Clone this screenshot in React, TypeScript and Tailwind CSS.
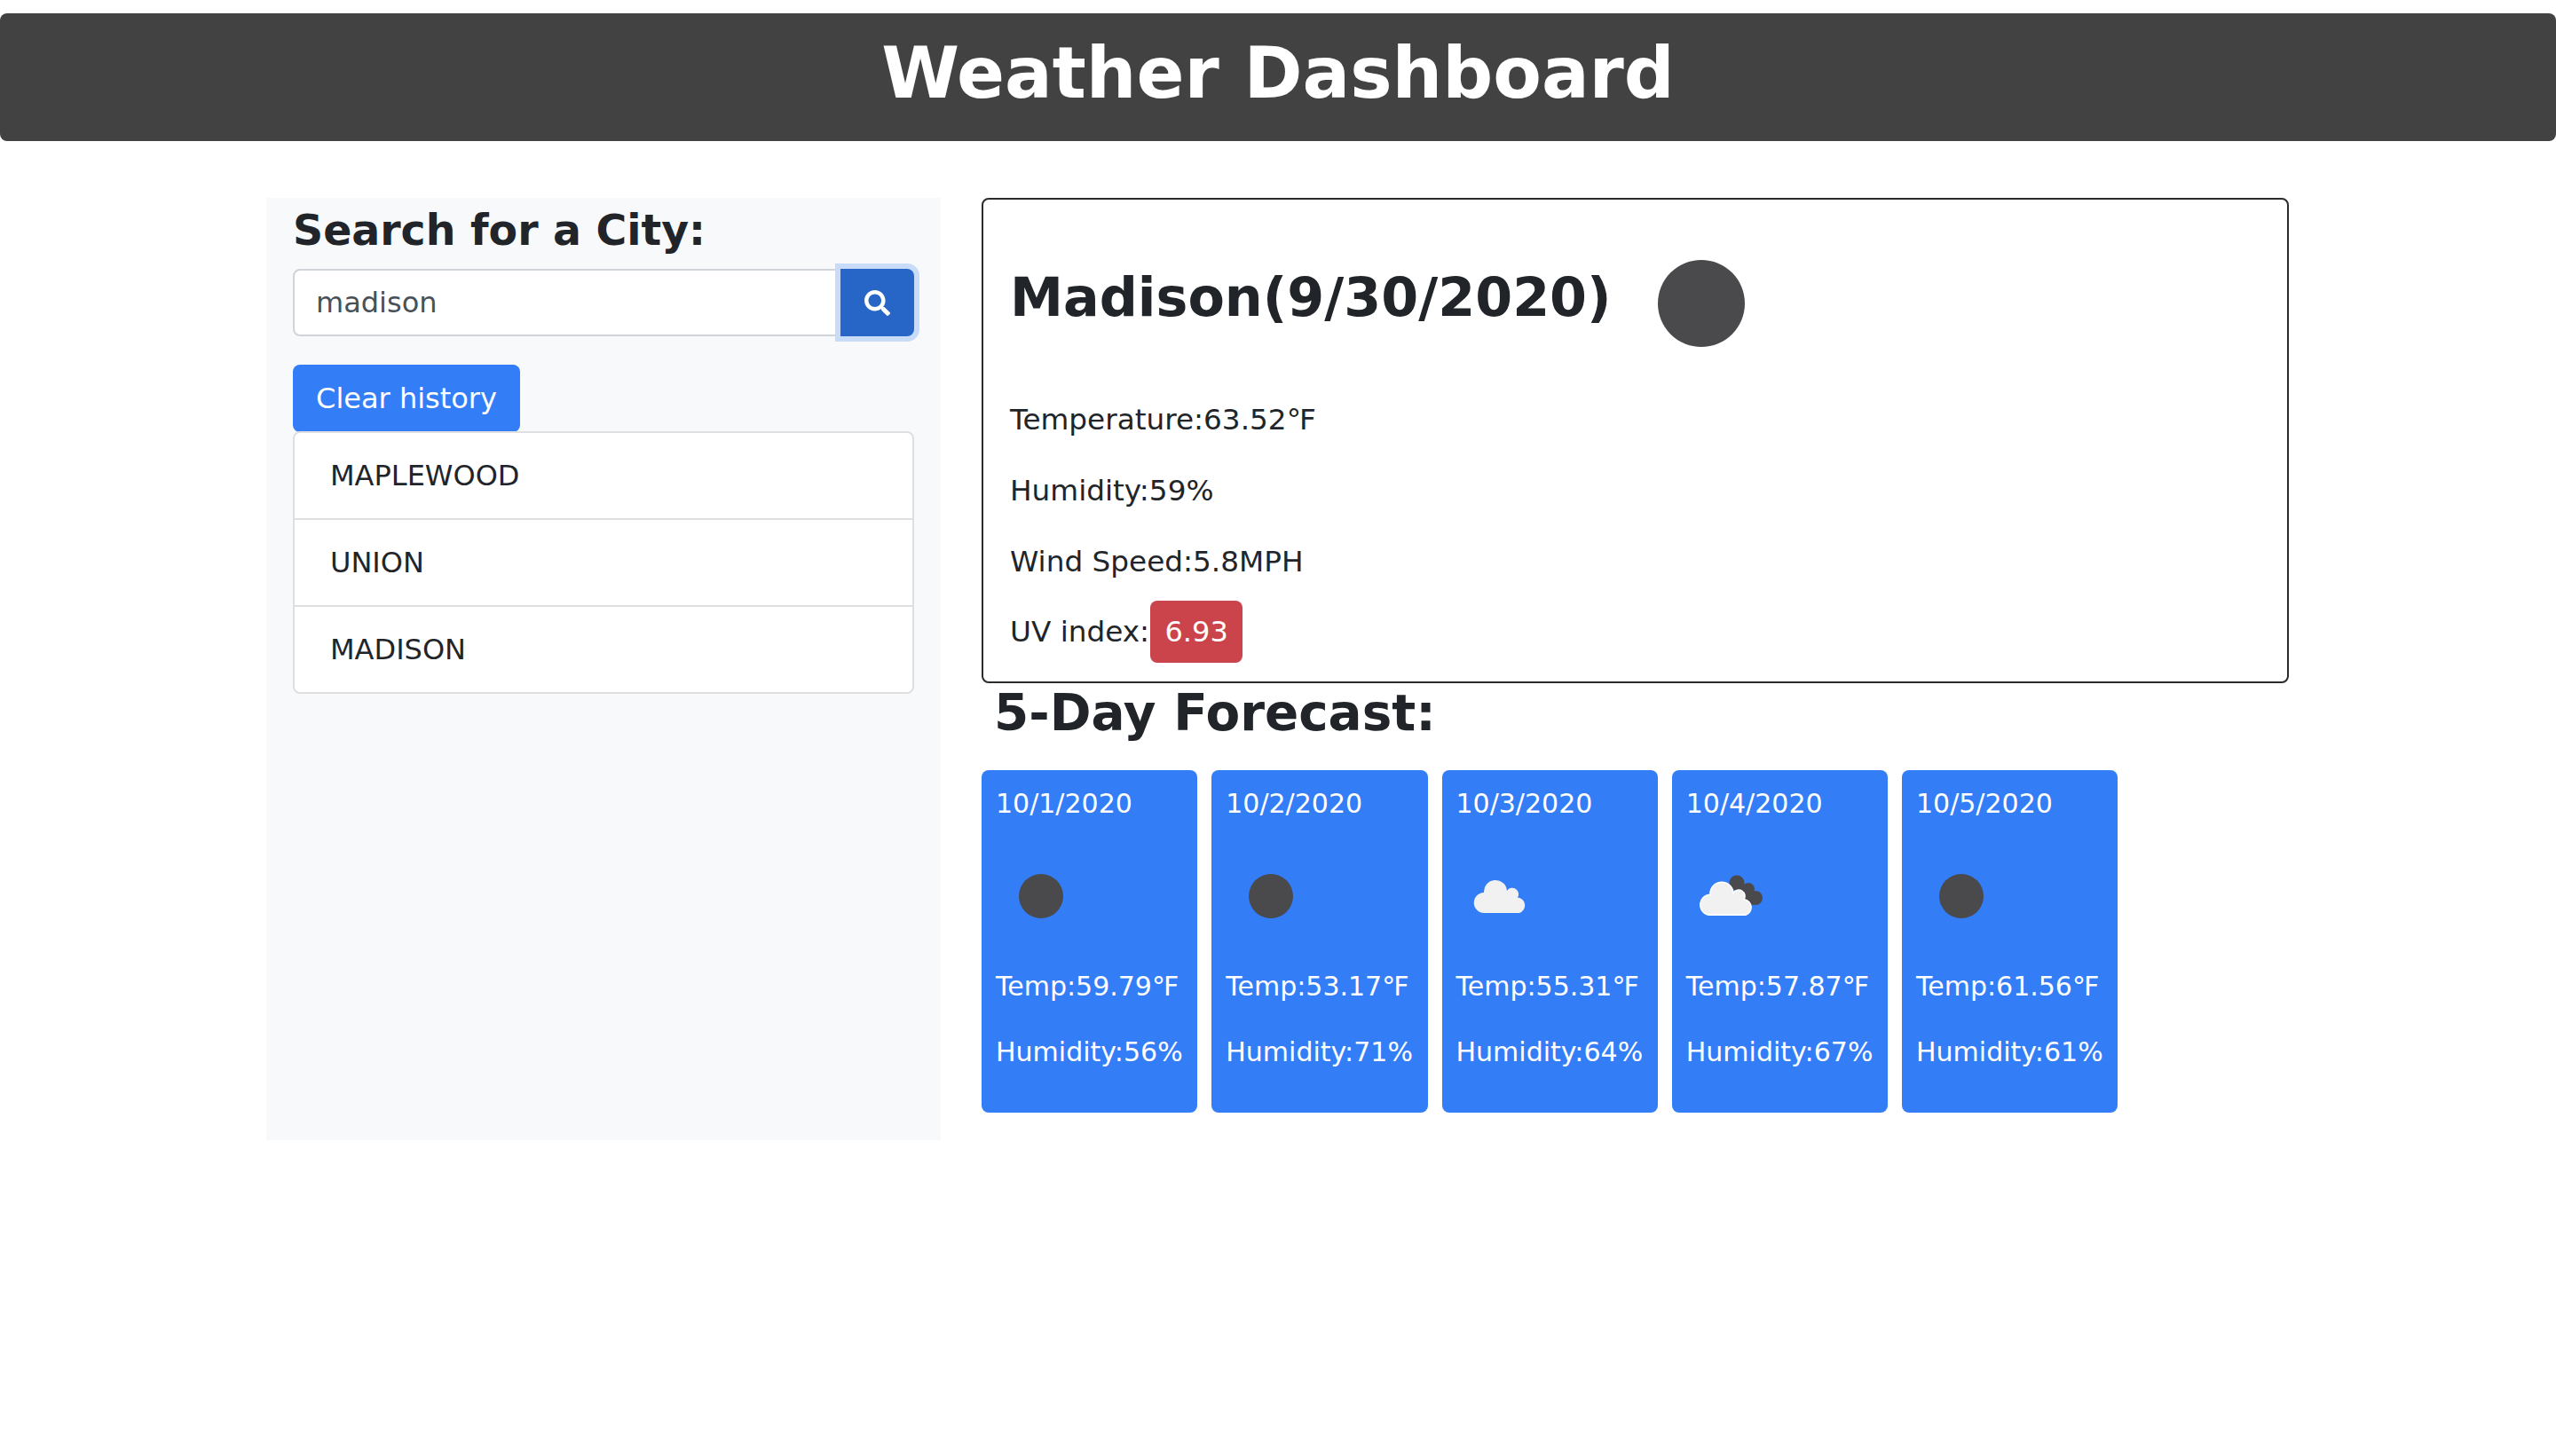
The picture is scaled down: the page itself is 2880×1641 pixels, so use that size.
import React from 'react';
import { FaSearch } from 'react-icons/fa';

const history = ['MAPLEWOOD', 'UNION', 'MADISON'];

const forecast = [
  { date: '10/1/2020', icon: 'dot', temp: '59.79', humidity: '56' },
  { date: '10/2/2020', icon: 'dot', temp: '53.17', humidity: '71' },
  { date: '10/3/2020', icon: 'cloud', temp: '55.31', humidity: '64' },
  { date: '10/4/2020', icon: 'broken', temp: '57.87', humidity: '67' },
  { date: '10/5/2020', icon: 'dot', temp: '61.56', humidity: '61' },
];

const cloudPath = 'M31.500 69A11.500 11.500 0 0 1 31 46A13 13 0 0 1 57 44A6.500 6.500 0 0 1 69 51.500A9 9 0 0 1 71 69Z';

const WeatherIcon = ({ icon }: { icon: string }) => (
  <svg width="100" height="100" viewBox="0 0 100 100">
    {icon === 'dot' && <circle cx="51" cy="50" r="25" fill="#4a4a4d" />}
    {icon === 'cloud' && <path d={cloudPath} fill="#f1f1f1" />}
    {icon === 'broken' && (
      <>
        <circle cx="57" cy="35" r="8.500" fill="#4a4a4d" />
        <circle cx="70" cy="42" r="7" fill="#4a4a4d" />
        <circle cx="78" cy="52" r="8" fill="#4a4a4d" />
        <path d="M52 38L70 36L84 56L70 62Z" fill="#4a4a4d" />
        <path d={cloudPath} transform="translate(-4 2.300)" fill="#f1f1f1" stroke="#ffffff" strokeWidth="1.500" />
      </>
    )}
  </svg>
);

const App = () => {
  return (
    <div className="min-h-[1641px] bg-white pt-[15px] font-['DejaVu_Sans',sans-serif] text-[32px] text-[#212529]">
      {/* Header */}
      <header className="flex h-[144px] justify-center rounded-lg bg-[#424242] pt-[20px]">
        <h1 className="text-[79.600px] leading-[96px] font-bold text-white">Weather Dashboard</h1>
      </header>

      <div className="mt-[64px] flex items-start pl-[300px]">
        {/* Sidebar */}
        <aside className="flex h-[1062px] w-[760px] flex-col bg-[#f8f9fa] px-[30px] pt-[8px]">
          <h2 className="text-[47.400px] leading-[58px] font-bold">Search for a City:</h2>
          <div className="mt-[14px] flex h-[76px] w-[700px]">
            <input
              readOnly
              value="madison"
              className="h-[76px] flex-1 rounded-l-lg border-2 border-[#ced4da] bg-white px-6 text-[#495057] outline-none"
            />
            <button className="z-10 flex h-[76px] w-[83px] items-center justify-center rounded-r-lg bg-[#2766c6] shadow-[0_0_0_6px_#c8dbf8]">
              <FaSearch size={29} color="white" />
            </button>
          </div>
          <button className="mt-[32px] h-[76px] w-[256px] rounded-lg bg-[#337df7] text-white">Clear history</button>
          <ul className="-mt-px w-[700px] rounded-lg border-2 border-[#dfdfdf] bg-white">
            {history.map((city, i) => (
              <li
                key={city}
                className={i === 0 ? 'flex h-[96px] items-center px-10' : 'flex h-[98px] items-center border-t-2 border-[#dfdfdf] px-10'}
              >
                {city}
              </li>
            ))}
          </ul>
        </aside>

        <main className="ml-[46px] w-[1473px]">
          {/* Current weather */}
          <section className="flex h-[547px] flex-col rounded-lg border-2 border-[#2b2b2b] px-[30px] text-[32.700px]">
            <div className="mt-[67px] flex h-[99px] items-center">
              <h2 className="mb-[14px] text-[60.300px] leading-[72px] font-bold">Madison(9/30/2020)</h2>
              <div className="ml-[52px] h-[98px] w-[98px] rounded-full bg-[#4a4a4d]" />
            </div>
            <p className="mt-[42px] leading-[80px]">Temperature:63.52<span className="tracking-[-2px]">°</span>F</p>
            <p className="leading-[80px]">Humidity:59%</p>
            <p className="leading-[80px]">Wind Speed:5.8MPH</p>
            <p className="flex h-[80px] items-center">
              UV index:
              <span className="-mt-[2px] ml-[1px] flex h-[70px] w-[104px] items-center justify-center rounded-lg bg-[#cb444c] text-[32px] text-white">6.93</span>
            </p>
          </section>

          {/* 5 day forecast */}
          <h2 className="ml-[14px] text-[56.400px] leading-[68px] font-bold">5-Day Forecast:</h2>
          <div className="mt-[30px] flex gap-[16px]">
            {forecast.map(day => (
              <div key={day.date} className="flex h-[386px] w-[243.250px] flex-col rounded-lg bg-[#337df7] px-[16px] text-[30px] leading-[40px] text-white">
                <p className="mt-[18px]">{day.date}</p>
                <div className="mt-[34px] h-[100px]">
                  <WeatherIcon icon={day.icon} />
                </div>
                <p className="mt-[32px]">Temp:{day.temp}<span className="tracking-[-2px]">°</span>F</p>
                <p className="mt-[34px]">Humidity:{day.humidity}%</p>
              </div>
            ))}
          </div>
        </main>
      </div>
    </div>
  );
};

export default App;
